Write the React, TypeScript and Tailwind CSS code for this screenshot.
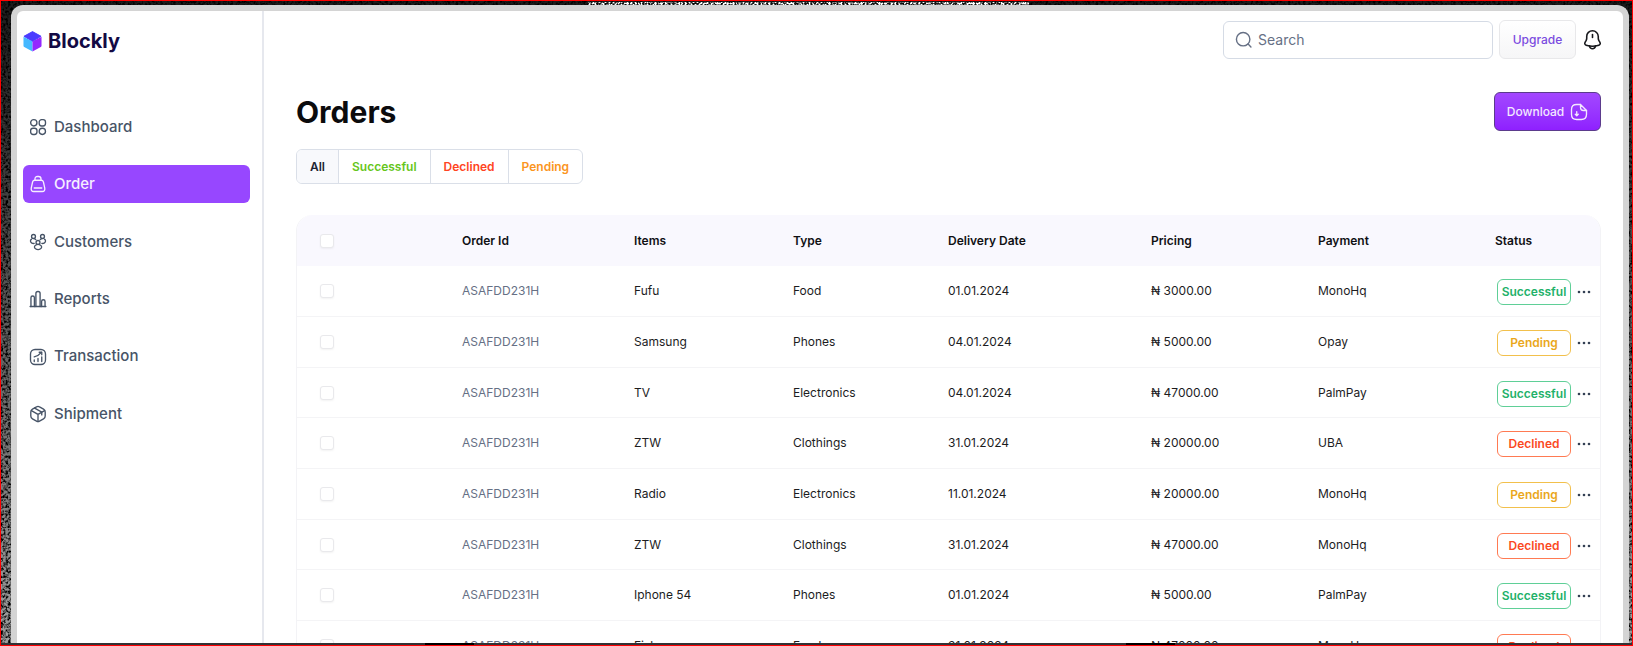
import React from "react";

type Status = "Successful" | "Pending" | "Declined";

interface Order {
  id: string;
  item: string;
  type: string;
  date: string;
  price: string;
  payment: string;
  status: Status;
}

const orders: Order[] = [
  { id: "ASAFDD231H", item: "Fufu", type: "Food", date: "01.01.2024", price: "₦ 3000.00", payment: "MonoHq", status: "Successful" },
  { id: "ASAFDD231H", item: "Samsung", type: "Phones", date: "04.01.2024", price: "₦ 5000.00", payment: "Opay", status: "Pending" },
  { id: "ASAFDD231H", item: "TV", type: "Electronics", date: "04.01.2024", price: "₦ 47000.00", payment: "PalmPay", status: "Successful" },
  { id: "ASAFDD231H", item: "ZTW", type: "Clothings", date: "31.01.2024", price: "₦ 20000.00", payment: "UBA", status: "Declined" },
  { id: "ASAFDD231H", item: "Radio", type: "Electronics", date: "11.01.2024", price: "₦ 20000.00", payment: "MonoHq", status: "Pending" },
  { id: "ASAFDD231H", item: "ZTW", type: "Clothings", date: "31.01.2024", price: "₦ 47000.00", payment: "MonoHq", status: "Declined" },
  { id: "ASAFDD231H", item: "Iphone 54", type: "Phones", date: "01.01.2024", price: "₦ 5000.00", payment: "PalmPay", status: "Successful" },
  { id: "ASAFDD231H", item: "Fish", type: "Food", date: "31.01.2024", price: "₦ 47000.00", payment: "MonoHq", status: "Declined" },
];

const badgeStyles: Record<Status, string> = {
  Successful: "border-[#5fcf97] text-[#22b169]",
  Pending: "border-[#f2c04c] text-[#eaa71c]",
  Declined: "border-[#ff7a52] text-[#fb4a1f]",
};

function Icon({ children, className = "size-[18px]", strokeWidth = 1.8 }: { children: React.ReactNode; className?: string; strokeWidth?: number }) {
  return (
    <svg viewBox="0 0 24 24" className={className} fill="none" stroke="currentColor" strokeWidth={strokeWidth} strokeLinecap="round" strokeLinejoin="round" aria-hidden="true">
      {children}
    </svg>
  );
}

const navItems = [
  {
    label: "Dashboard",
    icon: (
      <Icon>
        <circle cx="6.4" cy="6.4" r="4.2" />
        <rect x="13.6" y="2.2" width="8.4" height="8.4" rx="3.2" />
        <rect x="2.2" y="13.6" width="8.4" height="8.4" rx="3.2" />
        <circle cx="17.8" cy="17.8" r="4.2" />
      </Icon>
    ),
  },
  {
    label: "Order",
    icon: (
      <Icon>
        <path d="M7.600 7h8.800c1.300 0 2.400.900 2.800 2.200l1.800 8.300c.500 2.500-.700 4.500-3.200 4.500H6.200c-2.500 0-3.700-2-3.200-4.500l1.800-8.300C5.200 7.900 6.300 7 7.600 7Z" />
        <path d="M8 7V5.200C8 3.200 9.200 2 11.200 2h1.600C14.800 2 16 3.200 16 5.200V7" />
        <path d="M7 17.300h10" />
      </Icon>
    ),
  },
  {
    label: "Customers",
    icon: (
      <Icon>
        <circle cx="6" cy="4.600" r="2.600" />
        <circle cx="18" cy="4.600" r="2.600" />
        <circle cx="12" cy="12.600" r="2.600" />
        <path d="M3.400 8.200c-1.900 1.300-1.900 3.600 0 4.900 1 .700 2.300 1 3.500.800" />
        <path d="M20.600 8.200c1.900 1.300 1.900 3.600 0 4.900-1 .700-2.300 1-3.500.800" />
        <path d="M6 7.400c1.200 0 2.300.500 3 1.300M18 7.400c-1.200 0-2.300.500-3 1.300" />
        <path d="M8.700 16.300c-1.900 1.300-1.900 3.400 0 4.700 1.900 1.300 4.900 1.300 6.700 0 1.900-1.300 1.900-3.400 0-4.700-1.900-1.200-4.900-1.200-6.700 0Z" />
      </Icon>
    ),
  },
  {
    label: "Reports",
    icon: (
      <Icon>
        <path d="M1.500 22h21" />
        <path d="M9.200 22V4.500C9.200 2.900 10 2 12 2s2.800.900 2.800 2.500V22" />
        <path d="M2.600 22V10.200c0-1.400.700-2.200 2.300-2.200s2.300.800 2.300 2.200V22" />
        <path d="M16.800 22v-6.800c0-1.400.700-2.200 2.300-2.200s2.300.800 2.300 2.200V22" />
      </Icon>
    ),
  },
  {
    label: "Transaction",
    icon: (
      <Icon>
        <rect x="2" y="2" width="20" height="20" rx="6" />
        <path d="M7 18v-2M12 18v-4M17 18v-6" />
        <path d="M7 11.800c3.800-.900 7-3 9.600-6" />
        <path d="M13.600 5.600H17V9" />
      </Icon>
    ),
  },
  {
    label: "Shipment",
    icon: (
      <Icon>
        <path d="M3.200 7.500 12 12.500l8.800-5M12 21.600v-9.100" />
        <path d="M10 2.500 4.600 5.500C3.400 6.200 2.400 7.800 2.400 9.200v5.600c0 1.400 1 3 2.200 3.700L10 21.500c1.100.700 2.900.700 4 0l5.400-3c1.200-.700 2.200-2.300 2.200-3.700V9.200c0-1.400-1-3-2.200-3.700L14 2.500c-1.100-.700-2.900-.700-4 0Z" />
        <path d="M17 13.200V9.600L7.500 4.100" />
      </Icon>
    ),
  },
];

const filters = [
  { label: "All", style: "bg-[#f8f9fc] text-[#1d2433]" },
  { label: "Successful", style: "text-[#66c61c]" },
  { label: "Declined", style: "text-[#ff4422]" },
  { label: "Pending", style: "text-[#fb951e]" },
];

const columns = [
  { label: "Order Id", width: "w-[172px]" },
  { label: "Items", width: "w-[159px]" },
  { label: "Type", width: "w-[155px]" },
  { label: "Delivery Date", width: "w-[203px]" },
  { label: "Pricing", width: "w-[167px]" },
  { label: "Payment", width: "w-[177px]" },
  { label: "Status", width: "w-[105px]" },
];

function Backdrop() {
  return (
    <div className="absolute inset-0 bg-linear-to-b from-[#1c1c1c] via-[#5c5c5c] to-[#a0a0a0]">
      <svg className="size-full" aria-hidden="true">
        <defs>
          <filter id="grain" x="0" y="0" width="100%" height="100%">
            <feTurbulence type="fractalNoise" baseFrequency="0.4" numOctaves="2" seed="4" />
            <feColorMatrix values="0 0 0 0 0  0 0 0 0 0  0 0 0 0 0  3 0 0 0 -1.200" />
          </filter>
          <filter id="sparkle" x="0" y="0" width="100%" height="100%">
            <feTurbulence type="fractalNoise" baseFrequency="0.5" numOctaves="2" seed="9" />
            <feColorMatrix values="0 0 0 0 1  0 0 0 0 1  0 0 0 0 1  8 0 0 0 -3.600" />
          </filter>
        </defs>
        <rect width="100%" height="100%" filter="url(#grain)" />
        <rect x="36%" y="1" width="27%" height="4" filter="url(#sparkle)" />
      </svg>
    </div>
  );
}

function Logo() {
  return (
    <svg viewBox="0 0 20 22" className="h-[21px] w-[19px]" aria-hidden="true">
      <path d="M10 .6 19 5.500 10 11 1 5.500Z" fill="#4b3bff" stroke="#4b3bff" strokeWidth="1" strokeLinejoin="round" />
      <path d="M.5 5.900 10 11v10.500L1.300 16.700a1.500 1.500 0 0 1-.8-1.300Z" fill="#45b8ff" />
      <path d="M19.500 5.900 10 11v10.500l8.700-4.800a1.500 1.500 0 0 0 .8-1.300Z" fill="#9327ff" />
    </svg>
  );
}

function Tick({ label }: { label: string }) {
  return (
    <input
      type="checkbox"
      aria-label={label}
      className="block size-[14px] appearance-none rounded-[3px] border border-[#e9e9ec] bg-white shadow-xs checked:bg-[#9747ff]"
    />
  );
}

function Sidebar() {
  return (
    <aside className="w-[247px] shrink-0 border-r-2 border-[#e6e8ee] px-1.5 pt-4">
      <a href="#home" className="flex h-7 items-center gap-1.5 text-xl font-bold text-[#130a44]">
        <Logo />
        Blockly
      </a>
      <nav className="mt-[53px] mr-1.5 flex h-[325px] flex-col justify-between">
        {navItems.map((item) => (
          <a
            key={item.label}
            href={"#" + item.label.toLowerCase()}
            className={
              item.label === "Order"
                ? "flex h-[38px] items-center gap-[7px] rounded-md bg-[#9747ff] px-1.5 text-[15px] font-medium text-[#f6efff]"
                : "flex h-[38px] items-center gap-[7px] rounded-md px-1.5 text-[15px] font-medium text-[#475467]"
            }
          >
            {item.icon}
            {item.label}
          </a>
        ))}
      </nav>
    </aside>
  );
}

function TopBar() {
  return (
    <header className="flex h-[39px] items-center justify-end gap-1.5">
      <label className="flex h-[38px] w-[270px] items-center gap-1.5 rounded-md border border-[#d5dbe5] bg-white pl-[11px] text-[#667085]">
        <Icon className="size-[17px]" strokeWidth={2}>
          <circle cx="11.500" cy="11.500" r="9.500" />
          <path d="m18.500 18.500 4 4" />
        </Icon>
        <input type="search" aria-label="Search" placeholder="Search" className="min-w-0 flex-1 bg-transparent text-sm outline-none placeholder:text-[#667085]" />
      </label>
      <button className="h-[39px] w-[77px] rounded-md border border-[#e8e8ea] bg-linear-to-b from-white to-[#f6f6f7] text-xs font-medium text-[#7a4be0]">
        Upgrade
      </button>
      <button aria-label="Notifications" className="flex w-[19px] justify-start text-[#17181c]">
        <Icon className="size-[21px] shrink-0" strokeWidth={1.8}>
          <path d="M12 6.400v3.400" />
          <path d="M12 2C8.300 2 5.400 4.900 5.400 8.600v2.100c0 .700-.3 1.700-.6 2.300l-1.300 2.200c-.8 1.400-.2 2.900 1.300 3.400 4.600 1.500 9.800 1.500 14.400 0 1.500-.5 2.100-2 1.300-3.400L19.200 13c-.3-.6-.6-1.600-.6-2.300V8.600C18.600 5 15.600 2 12 2Z" />
          <path d="M15.300 19.300a3.300 3.300 0 0 1-6.600 0" />
        </Icon>
      </button>
    </header>
  );
}

function OrdersTable() {
  return (
    <div className="mt-[31px] rounded-t-2xl border-x border-[#f3f3f6]">
      <table className="w-full table-fixed border-separate border-spacing-0 text-left text-xs text-[#1c1c1e]">
        <thead>
          <tr className="h-[51px] [&>th]:bg-[#f9f8fe]">
            <th className="w-[165px] rounded-tl-2xl pl-[23px]">
              <Tick label="Select all orders" />
            </th>
            {columns.map((column) => (
              <th key={column.label} className={column.width + " font-semibold text-[#101014] last:rounded-tr-2xl"}>
                {column.label}
              </th>
            ))}
          </tr>
        </thead>
        <tbody>
          {orders.map((order, index) => (
            <tr key={index} className="h-[51px] nth-[3n]:h-[50px] [&>td]:border-b [&>td]:border-[#f4f4f6]">
              <td className="pl-[23px]">
                <Tick label={"Select order " + (index + 1)} />
              </td>
              <td className="text-[#667085]">{order.id}</td>
              <td>{order.item}</td>
              <td>{order.type}</td>
              <td>{order.date}</td>
              <td>{order.price}</td>
              <td>{order.payment}</td>
              <td>
                <div className="flex items-center gap-1.5 pl-0.5 pt-0.5">
                  <span className={"flex h-[26px] w-[74px] shrink-0 items-center justify-center rounded-md border font-semibold " + badgeStyles[order.status]}>
                    {order.status}
                  </span>
                  <button aria-label={"Actions for order " + (index + 1)} className="text-[#344054]">
                    <svg viewBox="0 0 14 4" className="h-1 w-3.5" fill="currentColor" aria-hidden="true">
                      <circle cx="2" cy="2" r="1.300" />
                      <circle cx="7" cy="2" r="1.300" />
                      <circle cx="12" cy="2" r="1.300" />
                    </svg>
                  </button>
                </div>
              </td>
            </tr>
          ))}
        </tbody>
      </table>
    </div>
  );
}

export default function App() {
  return (
    <div className="relative isolate flex h-screen flex-col overflow-hidden border border-[#ff0000] font-['Inter',sans-serif]">
      <Backdrop />
      <div className="relative mx-[10px] mt-1 mr-[3px] flex min-h-0 flex-1 overflow-hidden rounded-t-xl border-x-[6px] border-t-[6px] border-[#d4d4d4] bg-white">
        <Sidebar />
        <main className="min-w-0 flex-1 pt-[9px] pr-[22px] pl-8">
          <TopBar />
          <div className="mt-[33px] flex items-center justify-between">
            <h1 className="text-3xl font-bold text-[#0b0b0d]">Orders</h1>
            <button className="flex h-[39px] w-[107px] items-center justify-center gap-1.5 rounded-md border border-[#5b3b8c] bg-linear-to-b from-[#a347ff] to-[#8f1fff] text-xs font-medium text-[#f3e8ff]">
              Download
              <Icon className="size-[18px]">
                <path d="M9 11.500v5.500l-2-2M9 17l2-2" />
                <path d="M22 10v5c0 5-2 7-7 7H9c-5 0-7-2-7-7V9c0-5 2-7 7-7h5" />
                <path d="M22 10h-4c-3 0-4-1-4-4V2l8 8Z" />
              </Icon>
            </button>
          </div>
          <div className="mt-[18px] flex">
            <div className="flex h-[35px] divide-x divide-[#dadfe8] overflow-hidden rounded-md border border-[#dadfe8]">
              {filters.map((filter) => (
                <button key={filter.label} className={"px-[13px] text-xs font-semibold " + filter.style}>
                  {filter.label}
                </button>
              ))}
            </div>
          </div>
          <OrdersTable />
        </main>
      </div>
      <div className="relative flex h-0.5 shrink-0 bg-[#333336]">
        <div className="w-[26%]" />
        <div className="w-[3%] bg-black" />
        <div className="w-[40%]" />
        <div className="w-[3%] bg-black" />
      </div>
    </div>
  );
}
